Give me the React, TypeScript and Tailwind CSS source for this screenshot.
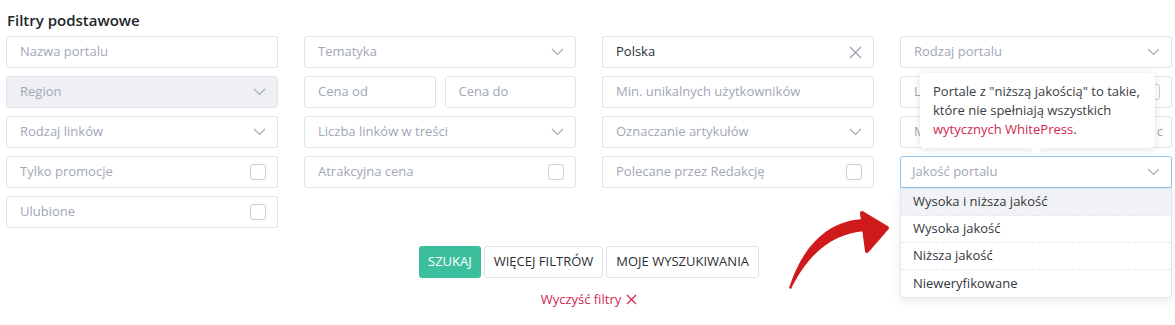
import React from "react";

const font = { fontFamily: '"Open Sans", "Liberation Sans", sans-serif' };

function Chevron() {
  return (
    <svg width="13" height="8" viewBox="0 0 13 8" className="shrink-0">
      <polyline points="1,1 6.5,6.5 12,1" fill="none" stroke="#a4aab7" strokeWidth="1.2" />
    </svg>
  );
}

function Box() {
  return <span className="w-4 h-4 shrink-0 rounded-[3px] border border-[#c9ced8] bg-white" />;
}

function Field({
  label,
  kind,
  disabled,
  value,
}: {
  label: string;
  kind?: "select" | "check" | "clear";
  disabled?: boolean;
  value?: boolean;
}) {
  return (
    <div
      className={`h-[32px] flex items-center justify-between gap-2 pl-[13px] pr-[11px] rounded-[3px] border border-[#dfe3ea] text-[13px] overflow-hidden ${
        disabled ? "bg-[#eef0f4]" : "bg-white"
      }`}
    >
      <span className={`truncate ${value ? "text-[#2d2f33]" : "text-[#a2a8b6]"}`}>{label}</span>
      {kind === "select" && <Chevron />}
      {kind === "check" && <Box />}
      {kind === "clear" && (
        <svg width="13" height="13" viewBox="0 0 13 13" className="shrink-0">
          <path d="M1 1L12 12M12 1L1 12" stroke="#9aa0ad" strokeWidth="1.3" />
        </svg>
      )}
    </div>
  );
}

export default function App() {
  return (
    <div className="relative w-[1175px] h-[325px] bg-white pl-[6px] pr-[3px] pt-[8px] overflow-hidden" style={font}>
      <h2 className="text-[15px] leading-[24px] font-semibold text-[#23262b] pl-px mb-[4px]">Filtry podstawowe</h2>

      <div className="grid grid-cols-4 gap-x-[26px] gap-y-[8px]">
        <Field label="Nazwa portalu" />
        <Field label="Tematyka" kind="select" />
        <Field label="Polska" kind="clear" value />
        <Field label="Rodzaj portalu" kind="select" />

        <Field label="Region" kind="select" disabled />
        <div className="grid grid-cols-2 gap-[9px]">
          <Field label="Cena od" />
          <Field label="Cena do" />
        </div>
        <Field label="Min. unikalnych użytkowników" />
        <Field label="Linki dofollow" kind="check" />

        <Field label="Rodzaj linków" kind="select" />
        <Field label="Liczba linków w treści" kind="select" />
        <Field label="Oznaczanie artykułów" kind="select" />
        <div className="h-[32px] flex items-center justify-between pl-[13px] pr-[8px] rounded-[3px] border border-[#dfe3ea] text-[13px] text-[#a2a8b6] overflow-hidden">
          <span>Mobilna wersja</span>
          <span>c</span>
        </div>

        <Field label="Tylko promocje" kind="check" />
        <Field label="Atrakcyjna cena" kind="check" />
        <Field label="Polecane przez Redakcję" kind="check" />
        <div className="relative">
          <div className="h-[32px] flex items-center justify-between pl-[11px] pr-[11px] rounded-t-[3px] border border-[#8cc4f0] bg-white text-[13px] text-[#a2a8b6]">
            <span>Jakość portalu</span>
            <Chevron />
          </div>
          <ul className="absolute left-0 right-0 top-[32px] z-10 bg-white border border-[#e2e5eb] rounded-b-[3px] shadow-[0_4px_10px_rgba(0,0,0,0.08)] text-[13px] text-[#34373c]">
            <li className="h-[27px] flex items-center pl-[12px] bg-[#f1f2f5] border-b border-dashed border-[#e6e8ec]">Wysoka i niższa jakość</li>
            <li className="h-[27px] flex items-center pl-[12px] border-b border-dashed border-[#e6e8ec]">Wysoka jakość</li>
            <li className="h-[27px] flex items-center pl-[12px] border-b border-dashed border-[#e6e8ec]">Niższa jakość</li>
            <li className="h-[27px] flex items-center pl-[12px]">Nieweryfikowane</li>
          </ul>
          <div className="absolute left-[20px] bottom-[40px] w-[235px] z-20 bg-white rounded-[4px] shadow-[0_1px_8px_rgba(0,0,0,0.12)] px-[13px] py-[9px] text-[13px] leading-[19px] text-[#3a3d42]">
            Portale z "niższą jakością" to takie, które nie spełniają wszystkich{" "}
            <span className="text-[#d2284f]">wytycznych WhitePress</span>.
            <span className="absolute left-[109px] -bottom-[6px] w-0 h-0 border-x-[7px] border-x-transparent border-t-[7px] border-t-white" />
          </div>
        </div>

        <Field label="Ulubione" kind="check" />
      </div>

      <div className="flex justify-center gap-[3px] mt-[18px] text-[13px] font-medium">
        <button className="h-[32px] px-[9px] rounded-[3px] bg-[#3cbf9c] text-white">SZUKAJ</button>
        <button className="h-[32px] px-[9px] rounded-[3px] border border-[#dfe3ea] bg-white text-[#2d2f33]">WIĘCEJ FILTRÓW</button>
        <button className="h-[32px] px-[9px] rounded-[3px] border border-[#dfe3ea] bg-white text-[#2d2f33]">MOJE WYSZUKIWANIA</button>
      </div>

      <div className="flex justify-center items-center gap-[5px] mt-[12px] text-[13px] text-[#d2284f]">
        <span>Wyczyść filtry</span>
        <svg width="11" height="11" viewBox="0 0 11 11">
          <path d="M1 1L10 10M10 1L1 10" stroke="#d2284f" strokeWidth="1.3" />
        </svg>
      </div>

      <svg className="absolute left-0 top-0 pointer-events-none" width="1175" height="325" viewBox="0 0 1175 325">
        <path
          d="M789 288 C801 250 826 219 866 219 L867 231 C832 233 808 254 791 289 Z"
          fill="#cf1a1c"
        />
        <path
          d="M862 213 L887 228 L867 251 Z"
          fill="#cf1a1c"
          stroke="#cf1a1c"
          strokeWidth="4"
          strokeLinejoin="round"
        />
      </svg>
    </div>
  );
}
